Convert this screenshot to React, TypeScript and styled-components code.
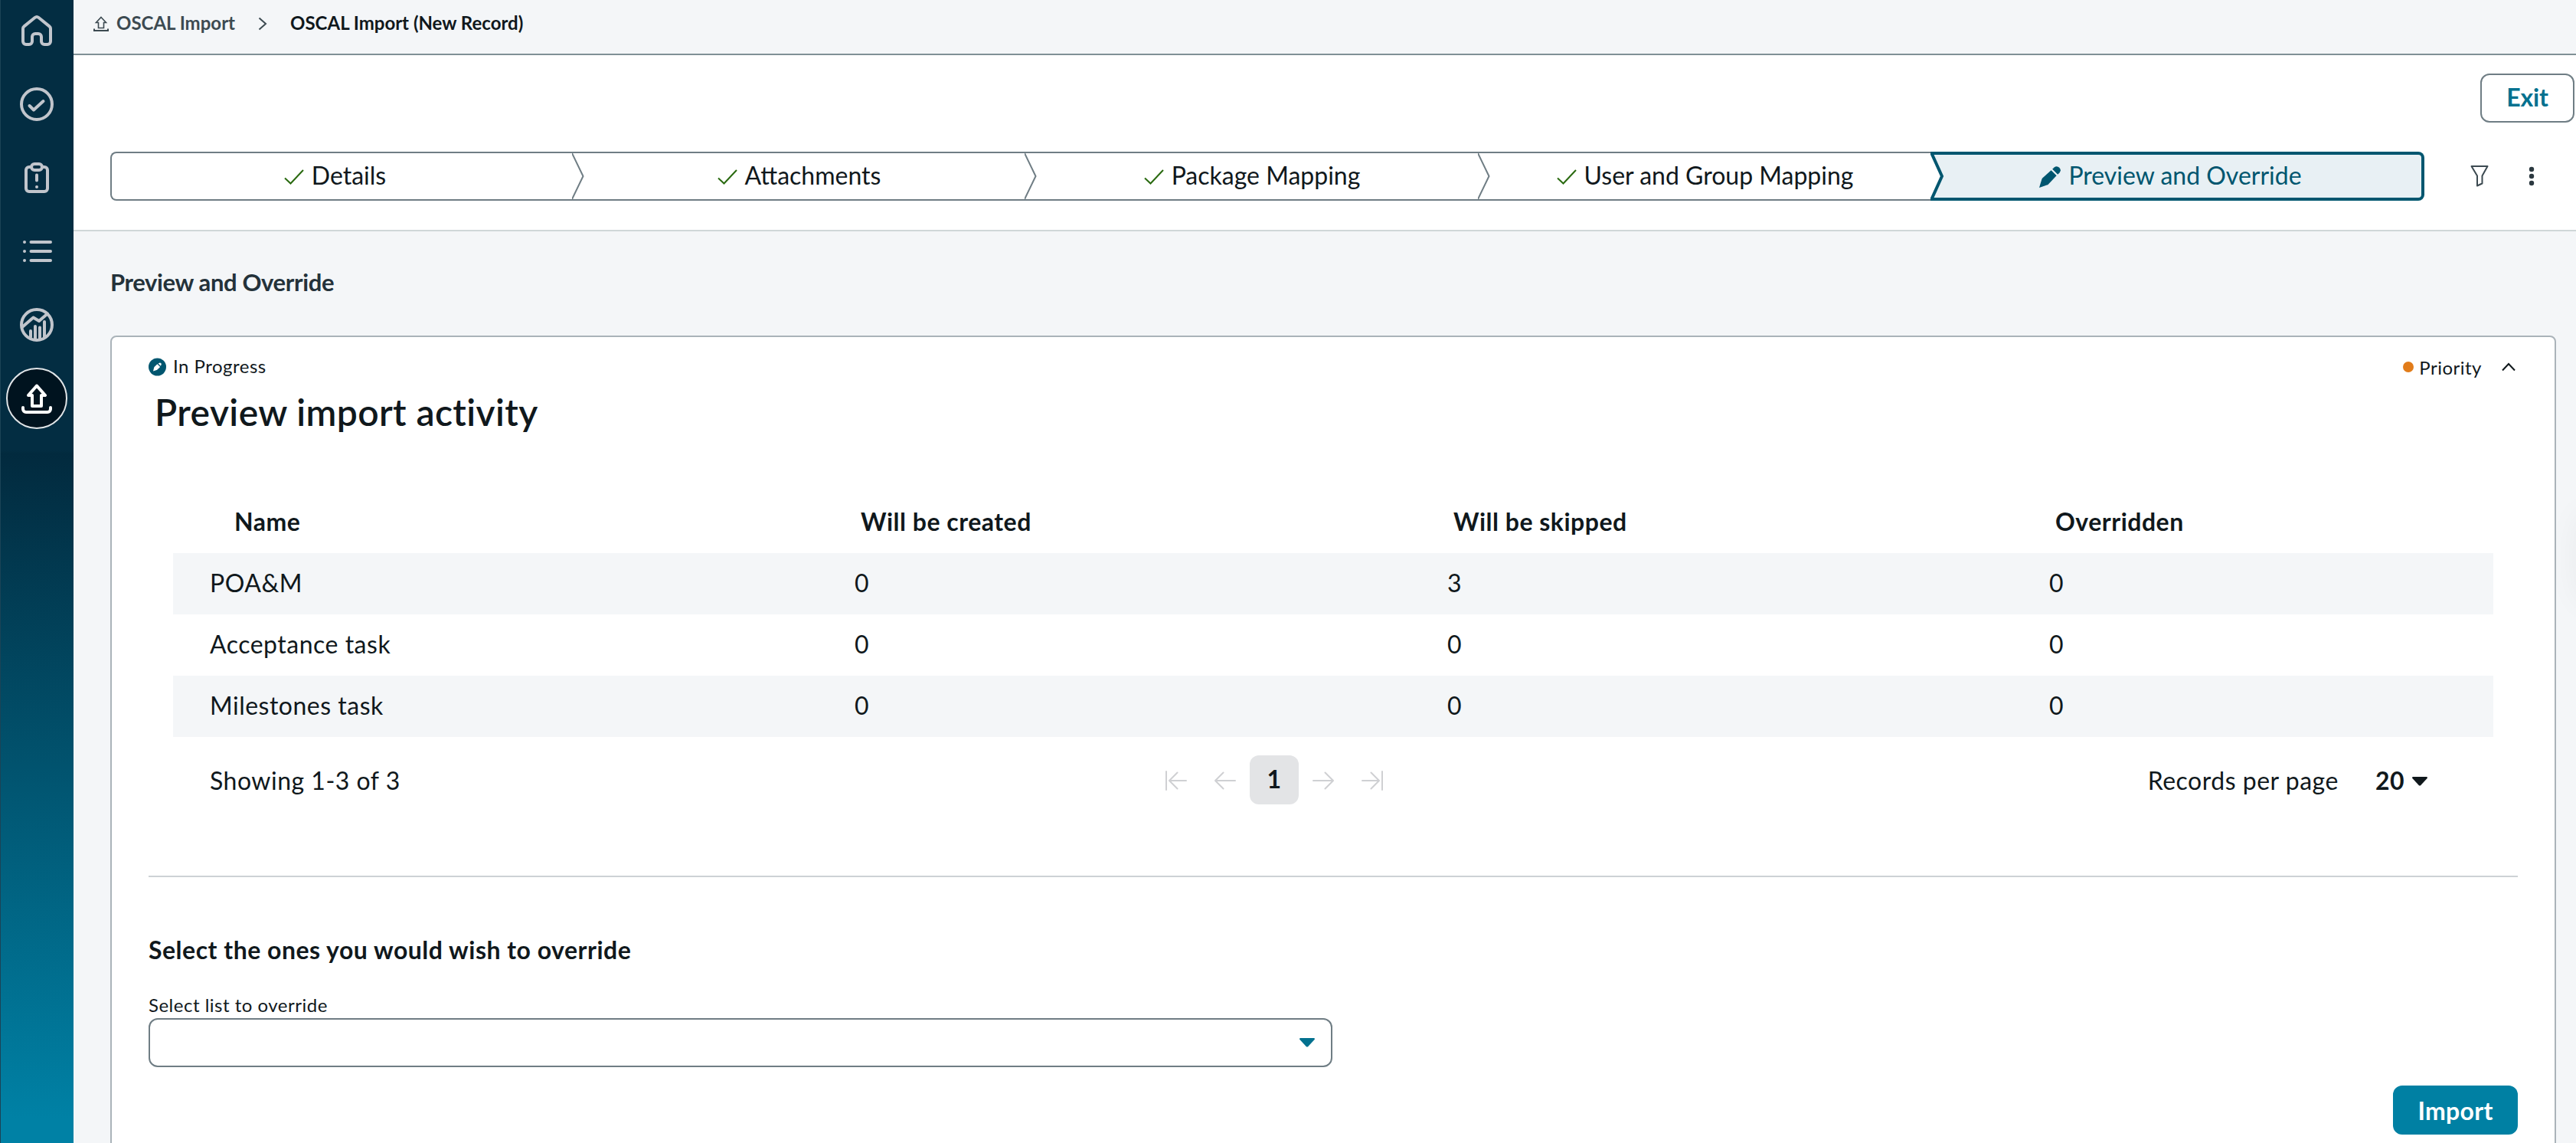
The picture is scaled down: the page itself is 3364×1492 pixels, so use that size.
import { ReactNode } from "react";
import styled, { createGlobalStyle, css } from "styled-components";

const GlobalStyle = createGlobalStyle`
  * {
    box-sizing: border-box;
  }

  html,
  body,
  #root {
    height: 100%;
    margin: 0;
  }

  body {
    overflow: hidden;
    background: #f4f6f8;
    color: #10181c;
    font-family: Lato, "Open Sans", sans-serif;
    font-size: 32px;
    line-height: 39px;
  }
`;

const Page = styled.div`
  position: relative;
  display: flex;
  height: 1492px;
  overflow: hidden;
`;

const Sidebar = styled.nav`
  display: flex;
  flex: 0 0 96px;
  flex-direction: column;
  align-items: center;
  border-left: 1px solid #1b4356;
  background: linear-gradient(
    180deg,
    #032d42 0,
    #032d42 588px,
    #022a3e 592px,
    #0081a5 1460px
  );
`;

const NavList = styled.div`
  margin: -8px 0 0 -1px;
`;

const NavItem = styled.a<{ $active?: boolean }>`
  display: flex;
  align-items: center;
  justify-content: center;
  width: 80px;
  height: 80px;
  margin: 8px 0 16px;
  border-radius: 50%;
  color: ${(props) => (props.$active ? "#ffffff" : "#c1c5cc")};
  ${(props) =>
    props.$active &&
    css`
      border: 2px solid #e1e5e8;
      background: #00131f;
    `}
`;

const Main = styled.main`
  display: flex;
  flex: 1;
  flex-direction: column;
  min-width: 0;
`;

const Breadcrumbs = styled.div`
  display: flex;
  align-items: center;
  flex: 0 0 72px;
  padding: 0 24px 11px;
  border-bottom: 2px solid #809096;
  font-size: 24px;
  font-weight: 700;
  line-height: 29px;
`;

const Crumb = styled.span<{ $current?: boolean }>`
  color: ${(props) => (props.$current ? "#10181c" : "#3c4a51")};
`;

const CrumbArrow = styled.svg`
  margin: 2px 30px 0;
`;

const CrumbIcon = styled.svg`
  margin: 2px 8px 0 0;
`;

const Header = styled.header`
  flex: 0 0 230px;
  padding-top: 24px;
  border-bottom: 2px solid #cfd7d8;
  background: #ffffff;
`;

const HeaderActions = styled.div`
  display: flex;
  justify-content: flex-end;
  padding-right: 2px;
`;

const Button = styled.button<{ $primary?: boolean }>`
  display: flex;
  align-items: center;
  justify-content: center;
  height: 64px;
  border-radius: 12px;
  font: 700 32px/39px Lato, sans-serif;
  ${(props) =>
    props.$primary
      ? css`
          width: 163px;
          padding: 0;
          border: 0;
          background: #0080a3;
          color: #ffffff;
          letter-spacing: 0.3px;
        `
      : css`
          width: 123px;
          padding: 0 0 3px;
          border: 2px solid #6f7d84;
          background: #ffffff;
          color: #03718f;
          letter-spacing: -0.1px;
        `}
`;

const StepperRow = styled.div`
  display: flex;
  align-items: center;
  margin: 38px 0 0 48px;
`;

const Stepper = styled.div`
  display: flex;
  width: 3022px;
  height: 64px;
`;

const Step = styled.div<{ $width: number; $active?: boolean }>`
  display: flex;
  width: ${(props) => props.$width}px;
  border: 2px solid #6f7d84;
  border-width: 2px 0;

  &:first-child {
    border-left-width: 2px;
    border-radius: 8px 0 0 8px;
  }

  ${(props) =>
    props.$active &&
    css`
      border: 4px solid #00566f;
      border-left-width: 0;
      border-radius: 0 8px 8px 0;
      background: #e8f0f4;
      color: #00566f;
    `}
`;

const StepLabel = styled.span<{ $offset?: number }>`
  display: flex;
  flex: 1;
  align-items: center;
  justify-content: center;
  gap: 10px;
  padding: 0 ${(props) => props.$offset || 0}px 3px 2px;

  svg {
    margin-top: 5px;
  }
`;

const StepChevron = styled.svg`
  flex: none;
  margin-right: -16px;
`;

const ActiveChevron = styled.svg`
  flex: none;
  margin: -4px -20px -4px 0;
`;

const FilterIcon = styled.svg`
  margin-left: 60px;
`;

const MoreIcon = styled.svg`
  margin-left: 52px;
`;

const SectionTitle = styled.h2`
  margin: 47px 0 50px 48px;
  color: #24323a;
  font-size: 31px;
  font-weight: 700;
  line-height: 39px;
  letter-spacing: -0.37px;
`;

const Card = styled.section`
  flex: none;
  height: 1100px;
  margin: 0 26px 0 48px;
  padding: 0 48px;
  border: 2px solid #aab3b9;
  border-radius: 8px;
  background: #ffffff;
`;

const CardHead = styled.div`
  display: flex;
  align-items: center;
  justify-content: space-between;
  height: 68px;
  padding-top: 10px;
`;

const Status = styled.div`
  display: flex;
  align-items: center;
  gap: 8px;
  font-size: 24px;
  line-height: 29px;
  letter-spacing: 0.5px;

  span {
    margin-top: -4px;
  }
`;

const Priority = styled.div`
  display: flex;
  align-items: center;
  padding-right: 3px;
  font-size: 24px;
  line-height: 29px;
  letter-spacing: 0.5px;

  svg {
    margin-left: 26px;
  }
`;

const PriorityDot = styled.i`
  width: 14px;
  height: 14px;
  margin-right: 7px;
  border-radius: 50%;
  background: #e17c1a;
`;

const CardTitle = styled.h1`
  margin: 0 0 72px 8px;
  font-size: 48px;
  font-weight: 600;
  line-height: 59px;
  letter-spacing: 0.4px;
`;

const Table = styled.div`
  margin: 0 32px;
  letter-spacing: 0.5px;
`;

const TableRow = styled.div<{ $striped?: boolean }>`
  display: grid;
  grid-template-columns: 840px 774px 786px 1fr;
  align-items: center;
  height: 80px;
  padding-bottom: 3px;
  background: ${(props) => (props.$striped ? "#f4f6f8" : "transparent")};
`;

const TableHead = styled(TableRow)`
  height: 83px;
  padding-bottom: 0;
  font-weight: 700;
`;

const Cell = styled.span`
  padding-left: 50px;

  &:first-child {
    padding-left: 48px;
  }
`;

const HeadCell = styled.span`
  padding-left: 58px;

  &:first-child {
    padding-left: 80px;
  }
`;

const TableFooter = styled.div`
  display: flex;
  align-items: center;
  height: 96px;
  margin-top: 8px;
  padding: 0 86px 0 48px;
`;

const Showing = styled.span`
  width: 1230px;
`;

const Pager = styled.div`
  display: flex;
`;

const PagerButton = styled.span<{ $current?: boolean }>`
  display: flex;
  align-items: center;
  justify-content: center;
  width: 64px;
  height: 64px;
  border-radius: 12px;
  ${(props) =>
    props.$current &&
    css`
      padding-bottom: 3px;
      background: #e3e4e6;
      font-weight: 700;
    `}
`;

const PageSize = styled.div`
  display: flex;
  align-items: center;
  margin-left: auto;

  b {
    margin: 0 10px 0 48px;
  }

  svg {
    margin-top: 3px;
  }
`;

const Divider = styled.hr`
  height: 2px;
  margin: 77px 0 75px;
  border: 0;
  background: #cdd2d5;
`;

const OverrideTitle = styled.h3`
  margin: 0 0 38px;
  font-size: 32px;
  font-weight: 700;
  line-height: 39px;
  letter-spacing: 0.5px;
`;

const Label = styled.label`
  display: block;
  margin-bottom: 3px;
  font-size: 24px;
  line-height: 29px;
  letter-spacing: 0.5px;
`;

const Select = styled.div`
  display: flex;
  align-items: center;
  justify-content: flex-end;
  width: 1546px;
  height: 64px;
  padding-right: 21px;
  border: 2px solid #6f7d84;
  border-radius: 12px;
`;

const CardActions = styled.div`
  display: flex;
  justify-content: flex-end;
  margin-top: 24px;
`;

// soft shadow of the collapsed side panel handle
const PanelShadow = styled.div`
  position: absolute;
  top: 668px;
  right: -40px;
  width: 36px;
  height: 120px;
  border-radius: 18px;
  box-shadow: 0 0 44px rgba(20, 30, 40, 0.06);
`;

const NavIcon = ({ children }: { children: ReactNode }) => (
  <svg
    width="48"
    height="48"
    viewBox="0 0 48 48"
    fill="none"
    stroke="currentColor"
    strokeWidth="4"
    strokeLinecap="round"
    strokeLinejoin="round"
  >
    {children}
  </svg>
);

const CheckIcon = () => (
  <svg width="26" height="22" viewBox="0 0 26 22" fill="none" stroke="#2a6a10" strokeWidth="2">
    <path d="M1 12.5 8.5 19.5 25 2" />
  </svg>
);

const PencilIcon = ({ size, color }: { size: number; color: string }) => (
  <svg width={size} height={size} viewBox="0 0 28 28" fill={color}>
    <path d="M0 28 3.2 17.4Q3.6 16.2 4.5 15.3L15.6 5.2 22.6 12.2 12 23.4Q11.2 24.2 10.2 24.6Z" />
    <path d="M17.2 3.8 19.6 1.5a4.9 4.9 0 0 1 6.9 6.9L24.2 10.8Z" />
  </svg>
);

const Caret = ({ color }: { color: string }) => (
  <svg width="20" height="12" viewBox="0 0 20 12" fill={color}>
    <path d="M1 0h18q1.600 0.500 0.600 2L11.300 11q-1.300 1.200-2.600 0L0.400 2Q-0.600 0.500 1 0z" />
  </svg>
);

const PagerIcon = ({ d }: { d: string }) => (
  <svg
    width="32"
    height="28"
    viewBox="0 0 32 28"
    fill="none"
    stroke="#cfd0d3"
    strokeWidth="2"
    strokeLinecap="round"
    strokeLinejoin="round"
  >
    <path d={d} />
  </svg>
);

const uploadArrow = "M24 7.500 35 20h-5v14H18V20h-5z";

const navItems = [
  {
    name: "home",
    icon: (
      <path d="M6 38V21.500a4 4 0 0 1 1.500-3.100L21.500 7a4 4 0 0 1 5 0l14 11.400a4 4 0 0 1 1.500 3.100V38a4 4 0 0 1-4 4h-4a4 4 0 0 1-4-4v-6a4 4 0 0 0-4-4h-4a4 4 0 0 0-4 4v6a4 4 0 0 1-4 4h-4a4 4 0 0 1-4-4z" />
    ),
  },
  {
    name: "approvals",
    icon: (
      <>
        <circle cx="24" cy="24" r="20" />
        <path d="M14.500 26 20 31.500 32.500 20" />
      </>
    ),
  },
  {
    name: "issues",
    icon: (
      <>
        <path d="M17 10h-3a4 4 0 0 0-4 4v24a4 4 0 0 0 4 4h20a4 4 0 0 0 4-4V14a4 4 0 0 0-4-4h-3" />
        <rect x="17" y="6" width="14" height="8" rx="4" />
        <path d="M24 20.500v7M24 36v0.010" />
      </>
    ),
  },
  {
    name: "lists",
    icon: <path d="M16.500 12H42M16.500 24H42M16.500 36H42M8 12v0.010M8 24v0.010M8 36v0.010" />,
  },
  {
    name: "analytics",
    icon: (
      <>
        <circle cx="24" cy="24" r="20" />
        <path d="M5 27 19.500 14.500 27 19 38 9.500M16 32v8M22 26v16M28 27.500V42M34 20v20" />
      </>
    ),
  },
  {
    name: "import",
    icon: (
      <>
        <path d={uploadArrow} />
        <path d="M6 36v2a4 4 0 0 0 4 4h28a4 4 0 0 0 4-4v-2" />
      </>
    ),
  },
];

const steps = [
  { label: "Details", width: 603, offset: 20 },
  { label: "Attachments", width: 591, offset: 0 },
  { label: "Package Mapping", width: 592, offset: 0 },
  { label: "User and Group Mapping", width: 591, offset: 0 },
];

const columns = ["Name", "Will be created", "Will be skipped", "Overridden"];

const rows = [
  ["POA&M", 0, 3, 0],
  ["Acceptance task", 0, 0, 0],
  ["Milestones task", 0, 0, 0],
];

export default function App() {
  return (
    <>
      <GlobalStyle />
      <Page>
        <Sidebar>
          <NavList>
            {navItems.map((item) => (
              <NavItem key={item.name} $active={item.name === "import"}>
                <NavIcon>{item.icon}</NavIcon>
              </NavItem>
            ))}
          </NavList>
        </Sidebar>
        <Main>
          <Breadcrumbs>
            <CrumbIcon width="24" height="24" viewBox="0 0 24 24" fill="none" stroke="#3c4a51">
              <path d="M12 3.500 18.500 10.500H15.500V17.500H8.500V10.500H5.500z" strokeWidth="1.600" />
              <path d="M3 18.500V21H21V18.500" strokeWidth="2" />
            </CrumbIcon>
            <Crumb>OSCAL Import</Crumb>
            <CrumbArrow width="12" height="18" viewBox="0 0 12 18" fill="none" stroke="#3c4a51" strokeWidth="2">
              <path d="M1.500 1.500 10 9 1.500 16.500" />
            </CrumbArrow>
            <Crumb $current>OSCAL Import (New Record)</Crumb>
          </Breadcrumbs>

          <Header>
            <HeaderActions>
              <Button>Exit</Button>
            </HeaderActions>
            <StepperRow>
              <Stepper>
                {steps.map((step, index) => (
                  <Step key={step.label} $width={step.width}>
                    {index > 0 && (
                      <StepChevron width="16" height="60" viewBox="0 0 16 60" fill="none" stroke="#6f7d84" strokeWidth="2">
                        <path d="M0 0 14.500 30 0 60" />
                      </StepChevron>
                    )}
                    <StepLabel $offset={step.offset}>
                      <CheckIcon />
                      {step.label}
                    </StepLabel>
                  </Step>
                ))}
                <Step $width={645} $active>
                  <ActiveChevron width="20" height="64" viewBox="0 0 20 64">
                    <path d="M0 4 14 32 0 60z" fill="#ffffff" />
                    <path d="M1 1 15 32 1 63" fill="none" stroke="#00566f" strokeWidth="4" />
                  </ActiveChevron>
                  <StepLabel $offset={16}>
                    <PencilIcon size={28} color="#00566f" />
                    Preview and Override
                  </StepLabel>
                </Step>
              </Stepper>
              <FilterIcon width="24" height="28" viewBox="0 0 24 28" fill="none" stroke="#3c4a51" strokeWidth="2">
                <path d="M1.500 1H22.500L15.500 13.500V23.500L9 26.500V13.500z" strokeLinejoin="round" />
              </FilterIcon>
              <MoreIcon width="8" height="26" viewBox="0 0 8 26" fill="#2c3940">
                <circle cx="4" cy="4" r="3.200" />
                <circle cx="4" cy="13" r="3.200" />
                <circle cx="4" cy="22" r="3.200" />
              </MoreIcon>
            </StepperRow>
          </Header>

          <SectionTitle>Preview and Override</SectionTitle>

          <Card>
            <CardHead>
              <Status>
                <svg width="24" height="24" viewBox="0 0 24 24">
                  <circle cx="11.500" cy="12" r="11.500" fill="#00566f" />
                  <g transform="translate(6 6.500) scale(0.390)" fill="#ffffff">
                    <path d="M0 28 3 16Q3.400 14.500 4.500 13.500L14 4.500 23.500 14 14 23Q13 24 12 24.500Z" />
                    <path d="M17 2.500 19.600 1a5 5 0 0 1 7 7L25.500 11Z" />
                  </g>
                </svg>
                <span>In Progress</span>
              </Status>
              <Priority>
                <PriorityDot />
                Priority
                <svg width="18" height="12" viewBox="0 0 18 12" fill="none" stroke="#10181c" strokeWidth="2">
                  <path d="M1 10.500 9 2 17 10.500" />
                </svg>
              </Priority>
            </CardHead>
            <CardTitle>Preview import activity</CardTitle>

            <Table>
              <TableHead>
                {columns.map((column) => (
                  <HeadCell key={column}>{column}</HeadCell>
                ))}
              </TableHead>
              {rows.map((row, index) => (
                <TableRow key={row[0]} $striped={index % 2 === 0}>
                  {row.map((value, cell) => (
                    <Cell key={cell}>{value}</Cell>
                  ))}
                </TableRow>
              ))}
              <TableFooter>
                <Showing>Showing 1-3 of 3</Showing>
                <Pager>
                  <PagerButton>
                    <PagerIcon d="M3 3V27M29 15H7M17.500 4.500 7 15 17.500 25.500" />
                  </PagerButton>
                  <PagerButton>
                    <PagerIcon d="M29 15H3M13.500 4.500 3 15 13.500 25.500" />
                  </PagerButton>
                  <PagerButton $current>1</PagerButton>
                  <PagerButton>
                    <PagerIcon d="M3 15H29M18.500 4.500 29 15 18.500 25.500" />
                  </PagerButton>
                  <PagerButton>
                    <PagerIcon d="M29 3V27M3 15H25M14.500 4.500 25 15 14.500 25.500" />
                  </PagerButton>
                </Pager>
                <PageSize>
                  Records per page
                  <b>20</b>
                  <Caret color="#10181c" />
                </PageSize>
              </TableFooter>
            </Table>

            <Divider />

            <OverrideTitle>Select the ones you would wish to override</OverrideTitle>
            <Label>Select list to override</Label>
            <Select>
              <Caret color="#03718f" />
            </Select>
            <CardActions>
              <Button $primary>Import</Button>
            </CardActions>
          </Card>
        </Main>
        <PanelShadow />
      </Page>
    </>
  );
}
